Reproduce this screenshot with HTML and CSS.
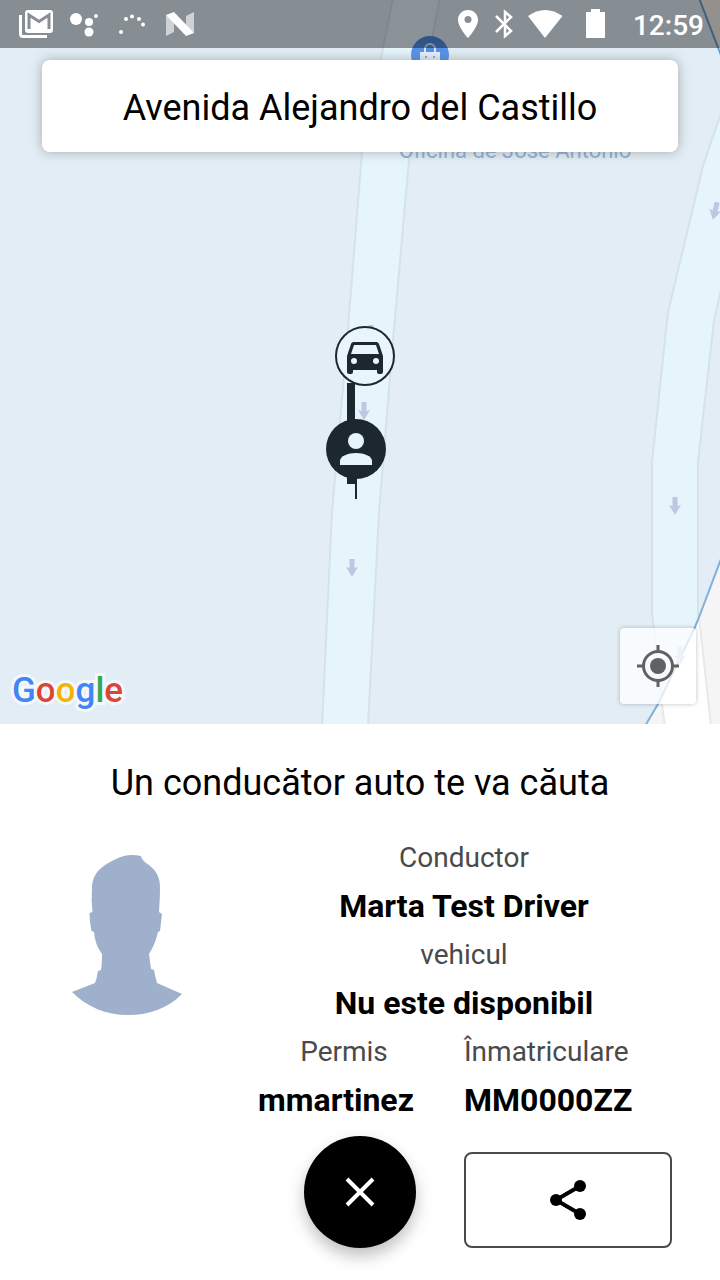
FILE: index.html
```html
<!DOCTYPE html>
<html lang="ro">
<head>
	<meta charset="utf-8">
	<meta name="viewport" content="width=device-width, initial-scale=1">
	<title>Un conducător auto te va căuta</title>
	<link rel="stylesheet" href="styles.css">
</head>
<body>
<main class="app">
	<section class="map" aria-label="Map">
		<svg class="map-canvas" viewBox="0 0 720 724" preserveAspectRatio="xMidYMax slice" aria-hidden="true">
			<defs>
				<!-- one-way arrow, centered on 0 0 -->
				<path id="arrow" fill="#bcc8e2" d="M -2.500 -9 h 5 v 9 l 3.500 -1 l -6 10 l -6 -10 l 3.500 1 z"></path>
				<linearGradient id="poi-fill" x1="0" x2="0" y1="0" y2="1">
					<stop stop-color="#4a88e4" offset="0"></stop>
					<stop stop-color="#6aa4f4" offset="1"></stop>
				</linearGradient>
			</defs>

			<rect fill="#e2edf5" width="720" height="724"></rect>

			<!-- roads -->
			<path fill="#e6f4fc" stroke="#d6e2ea" stroke-width="2" d="M 393 -2 L 383 48 L 362 152 L 345 365 L 332 512 L 322 726 H 368 L 379 512 L 393 340 L 409 160 L 430 48 L 440 -2 z"></path>
			<path fill="#e6f4fc" stroke="#d6e2ea" stroke-width="2" d="M 722 110 L 703 166 L 668 312 L 652 462 V 612 L 665 726 H 711 L 698 612 V 462 L 714 320 L 722 286 z"></path>

			<!-- area outside of the zone -->
			<path fill="#f5f5f5" d="M 720 561 L 701 612 L 695 627 L 658 704 L 646 724 H 720 z"></path>
			<path fill="#fff" stroke="#e8e8e8" stroke-width="2" d="M 699 617 L 695 627 L 661 698 L 665 726 H 711 z"></path>
			<path fill="none" stroke="#7fb0dd" stroke-width="2" d="M 721 559 L 701 612 L 695 627 L 658 704 L 645 726"></path>
			<path fill="#f5f0ec" stroke="#6aa0d0" stroke-width="2" d="M 699 -2 L 722 58 V -2 z"></path>

			<use href="#arrow" transform="translate(371 334)"></use>
			<use href="#arrow" transform="translate(364 411)"></use>
			<use href="#arrow" transform="translate(352 568)"></use>
			<use href="#arrow" transform="translate(675 506)"></use>
			<use href="#arrow" transform="translate(715 211) rotate(14)"></use>
			<use href="#arrow" transform="translate(680 656)"></use>

			<!-- shop -->
			<circle fill="url(#poi-fill)" cx="430" cy="55" r="19"></circle>
			<path fill="none" stroke="#dfeafa" stroke-width="2" d="M 425 53 v -4 a 5 5 0 0 1 10 0 v 4"></path>
			<path fill="#e8f0fb" d="M 420 52 h 20 v 14 h -20 z"></path>
			<circle fill="#5c98ee" cx="426" cy="57" r="1"></circle>
			<circle fill="#5c98ee" cx="434" cy="57" r="1"></circle>
			<text class="poi" x="515" y="158" text-anchor="middle">Oficina de José Antonio</text>

			<!-- route -->
			<path fill="#1c272f" d="M 347 383 h 8 v 101 h -8 z"></path>

			<!-- car -->
			<circle fill="#e8f5fd" stroke="#1c272f" stroke-width="2" cx="365" cy="356" r="29"></circle>
			<path fill="#1c272f" fill-rule="evenodd" d="M 379 344 c -1 -1.400 -1.600 -2 -3 -2 H 354 c -1.400 0 -2.400 .6 -3 2 L 347 356 V 372 q 0 2 2 2 h 2 q 2 0 2 -2 v -2 h 24 v 2 q 0 2 2 2 h 2 q 2 0 2 -2 V 356 z M 354 345 h 22 l 3 9 h -28 z M 354 358 a 3 3 0 1 1 0 6 a 3 3 0 1 1 0 -6 M 376 358 a 3 3 0 1 1 0 6 a 3 3 0 1 1 0 -6"></path>

			<!-- passenger -->
			<path fill="#1c272f" d="M 355 478 h 2 v 21 h -2 z"></path>
			<circle fill="#1c272f" cx="356" cy="449" r="30"></circle>
			<circle fill="#e6f4fc" cx="356" cy="441" r="8"></circle>
			<path fill="#e6f4fc" d="M 340 465 v -4 c 0 -5 8 -8 16 -8 s 16 3 16 8 v 4 z"></path>
		</svg>

		<div class="status-bar">
			<svg width="48" height="48" viewBox="12 0 48 48" aria-hidden="true">
				<path fill="none" stroke="#fff" stroke-width="3" d="M 20.500 15 V 34 q 0 2.500 2.500 2.500 H 47"></path>
				<rect fill="#fff" x="25" y="10" width="28" height="23" rx="3"></rect>
				<path fill="none" stroke="#898d94" stroke-width="3" d="M 29 29 V 15 L 39 21.500 L 49 15 V 29"></path>
			</svg>
			<svg width="48" height="48" viewBox="60 0 48 48" fill="#fff" aria-hidden="true">
				<circle cx="76" cy="19" r="6"></circle>
				<circle cx="89" cy="22" r="4"></circle>
				<circle cx="96" cy="16" r="2"></circle>
				<circle cx="89" cy="32" r="4.500"></circle>
			</svg>
			<svg width="48" height="48" viewBox="108 0 48 48" fill="#fff" aria-hidden="true">
				<circle cx="121" cy="32" r="2"></circle>
				<circle cx="126" cy="19" r="2"></circle>
				<circle cx="132" cy="16.500" r="2"></circle>
				<circle cx="139" cy="19" r="2"></circle>
				<circle cx="143" cy="24.500" r="2"></circle>
			</svg>
			<svg width="48" height="48" viewBox="156 0 48 48" fill="#fff" aria-hidden="true">
				<path fill-opacity="0.6" d="M 166 15 L 174 20 V 32 L 166 36 z M 194 12 L 186 16 V 27 L 194 33 z"></path>
				<path d="M 166 15 L 174 12 L 194 33 L 186 36 z"></path>
			</svg>

			<svg class="push" width="36" height="48" viewBox="450 0 36 48" aria-hidden="true">
				<path fill="#fff" fill-rule="evenodd" d="M 468 10 c -6 0 -10 4.500 -10 10 c 0 7 10 18 10 18 s 10 -11 10 -18 c 0 -5.500 -4 -10 -10 -10 M 468 16 a 3.500 3.500 0 1 1 0 7 a 3.500 3.500 0 1 1 0 -7"></path>
			</svg>
			<svg width="36" height="48" viewBox="486 0 36 48" aria-hidden="true">
				<path fill="none" stroke="#fff" stroke-width="2.500" d="M 496 16 L 511 31 L 505 36 V 12 L 511 17 L 496 32"></path>
			</svg>
			<svg width="48" height="48" viewBox="522 0 48 48" aria-hidden="true">
				<path fill="#fff" d="M 528 16 Q 545 4 562.500 16 L 545 38 z"></path>
			</svg>
			<svg width="48" height="48" viewBox="570 0 48 48" aria-hidden="true">
				<path fill="#fff" d="M 586 12 h 5 v -3 h 9 v 3 h 5 v 26 h -19 z"></path>
			</svg>
			<time class="clock">12:59</time>
		</div>

		<h1 class="address">Avenida Alejandro del Castillo</h1>

		<div class="map-controls">
			<div class="google"><span class="blue">G</span><span class="red">o</span><span class="yellow">o</span><span class="blue">g</span><span class="green">l</span><span class="red">e</span></div>
			<button class="locate" type="button" aria-label="Locate">
				<svg width="44" height="44" viewBox="-22 -22 44 44" aria-hidden="true">
					<circle fill="#616161" r="8"></circle>
					<circle fill="none" stroke="#616161" stroke-width="3" r="14.500"></circle>
					<path stroke="#616161" stroke-width="3" d="M 0 -21 v 6 M 0 21 v -6 M -21 0 h 6 M 21 0 h -6"></path>
				</svg>
			</button>
		</div>
	</section>

	<section class="panel">
		<h2 class="panel-title">Un conducător auto te va căuta</h2>

		<div class="driver">
			<svg class="photo" width="112" height="162" viewBox="71 854 112 162" aria-hidden="true">
				<path fill="#9eb0cb" d="M 141 856 C 131 854 124 855 116 859 C 99 867 92 875 92 889 Q 91 900 92.500 912 L 89.500 913 Q 89.500 922 91.500 931 L 94 932 Q 95 945 102 954 Q 102 964 101 970 L 98 971 Q 97 978 95 983 L 72 992 C 87 1007 106 1015 128 1015 C 150 1015 168 1008 182 994 L 157 983 Q 155 976 154 970 L 151 969 L 149 954 Q 155 945 158 932 L 160 931 Q 161 922 162 914 L 159 912 Q 160 899 160 887 C 160 873 152 867 146 863 Q 141 859 141 856 z"></path>
			</svg>

			<dl class="details">
				<div class="wide">
					<dt>Conductor</dt>
					<dd>Marta Test Driver</dd>
				</div>
				<div class="wide">
					<dt>vehicul</dt>
					<dd>Nu este disponibil</dd>
				</div>
				<div class="license">
					<dt>Permis</dt>
					<dd>mmartinez</dd>
				</div>
				<div class="plate">
					<dt>Înmatriculare</dt>
					<dd>MM0000ZZ</dd>
				</div>
			</dl>
		</div>

		<div class="actions">
			<button class="cancel" type="button" aria-label="Cancel">
				<svg width="32" height="32" viewBox="-16 -16 32 32" aria-hidden="true">
					<path stroke="#fff" stroke-width="4" d="M -13 -13 L 13 13 M 13 -13 L -13 13"></path>
				</svg>
			</button>
			<button class="share" type="button" aria-label="Share">
				<svg width="40" height="40" viewBox="548 1180 40 40" aria-hidden="true">
					<path fill="none" stroke="#000" stroke-width="4" d="M 580 1186 L 556 1200 L 580 1214"></path>
					<circle cx="580" cy="1186" r="6"></circle>
					<circle cx="556" cy="1200" r="6"></circle>
					<circle cx="580" cy="1214" r="6"></circle>
				</svg>
			</button>
		</div>
	</section>
</main>
</body>
</html>
```

FILE: styles.css
```css
* {
  box-sizing: border-box;
  padding: 0;
  margin: 0;
}
body {
  font-family: Roboto, "Noto Sans", sans-serif;
  color: #000;
  background: #fff;
}
button {
  display: flex;
  justify-content: center;
  align-items: center;
  border: none;
  cursor: pointer;
}
svg {
  display: block;
}
.app {
  min-height: 100vh;
  display: flex;
  flex-direction: column;
}

/* the map takes the height left by the panel */
.map {
  position: relative;
  flex: 1;
  min-height: 400px;
  display: flex;
  flex-direction: column;
  overflow: hidden;
}
/* drawing behind the bar, the address and the controls */
.map-canvas {
  position: absolute;
  top: 0;
  left: 0;
  width: 100%;
  height: 100%;
}
.poi {
  font-size: 22px;
  fill: #8fb3d8;
}
.status-bar,
.address,
.map-controls {
  position: relative;
}
.status-bar {
  height: 48px;
  display: flex;
  align-items: center;
  padding: 0 16px 0 12px;
  background: rgba(0, 0, 0, 0.4);
}
.push {
  margin-left: auto;
}
.clock {
  margin-left: 15px;
  padding-top: 3px;
  font-size: 28px;
  font-weight: 500;
  color: #fff;
}
.address {
  margin: 12px 42px 0;
  padding: 22px 16px 18px;
  border-radius: 8px;
  background: #fff;
  box-shadow: 0 0 12px rgba(60, 50, 40, 0.35);
  font-size: 36px;
  font-weight: 400;
  line-height: 52px;
  text-align: center;
}
.map-controls {
  margin-top: auto;
  padding: 0 24px 20px 12px;
  display: flex;
  justify-content: space-between;
  align-items: flex-end;
}
.google {
  font-size: 35px;
  font-weight: 500;
  line-height: 26px;
  -webkit-text-stroke: 6px #f3f8fc;
  paint-order: stroke fill;
}
.blue {
  color: #4285f4;
}
.red {
  color: #db4437;
}
.yellow {
  color: #f4b400;
}
.green {
  color: #34a853;
}
.locate {
  width: 76px;
  height: 76px;
  border-radius: 4px;
  background: rgba(255, 255, 255, 0.75);
  box-shadow: 0 0 4px rgba(0, 0, 0, 0.25);
}

.panel {
  padding: 33px 0 32px;
  background: #fff;
}
.panel-title {
  margin-bottom: 24px;
  font-size: 36px;
  font-weight: 400;
  line-height: 52px;
  text-align: center;
}
.driver {
  display: flex;
  align-items: flex-start;
  padding-right: 16px;
}
.photo {
  flex: none;
  margin: 21px 41px 0 71px;
}
.details {
  flex: 1;
  display: grid;
  grid-template-columns: 1fr 1fr;
  text-align: center;
}
.wide {
  grid-column: span 2;
}
dt {
  font-size: 28px;
  line-height: 49px;
  color: #4a4a4a;
}
dd {
  font-size: 32px;
  font-weight: 700;
  line-height: 48px;
}
.license dd {
  padding-right: 16px;
}
.plate {
  text-align: left;
}

.actions {
  margin-top: 12px;
  padding: 0 48px;
  display: grid;
  grid-template-columns: 1fr 112px 1fr;
  gap: 48px;
  align-items: end;
}
.cancel {
  grid-column: 2;
  height: 112px;
  border-radius: 50%;
  background: #000;
  box-shadow: 0 8px 16px rgba(0, 0, 0, 0.25);
}
.share {
  height: 96px;
  border: 2px solid #4a4a4a;
  border-radius: 8px;
  background: #fff;
}
```
